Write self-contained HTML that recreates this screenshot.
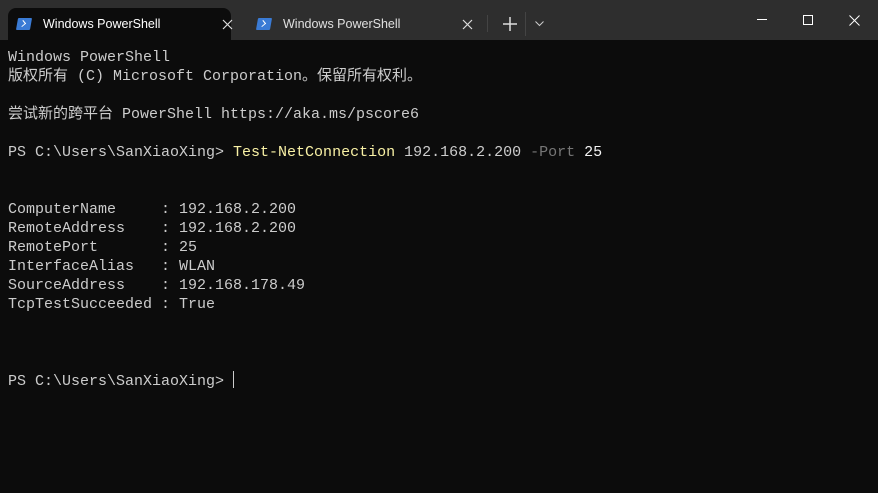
<!DOCTYPE html>
<html><head><meta charset="utf-8"><style>
body{margin:0;width:878px;height:493px;background:#0c0c0c;overflow:hidden;position:relative;font-family:"Liberation Sans",sans-serif}
.tb{position:absolute;left:0;top:0;width:878px;height:40px;background:#2e2e2e}
.tab{position:absolute;top:8px;height:32px;width:223px;left:8px;background:#0c0c0c;border-radius:8px 8px 0 0}
.t{position:absolute;font-size:12.5px;color:#fff;top:17px}
.ic{position:absolute;top:18px;width:14px;height:12px;background:#3a7bd5;transform:skewX(-10deg);border-radius:1px}
.ic:after{content:"";position:absolute;left:3px;top:3px;width:4px;height:4px;border-right:1.5px solid #fff;border-bottom:1.5px solid #fff;transform:rotate(-45deg)}
pre{position:absolute;left:8px;top:48px;margin:0;font-family:"Liberation Mono","Noto Sans CJK SC",monospace;font-size:15px;line-height:19px;color:#cccccc}
.y{color:#f9f1a5}.g{color:#767676}.w{color:#f2f2f2}
.cur{display:inline-block;width:1px;height:17px;background:#ccc;vertical-align:-3px}
</style></head><body>
<div class="tb">
<div class="tab"></div>
<div class="ic" style="left:17px"></div>
<div class="t" style="left:43px">Windows PowerShell</div>
<svg style="position:absolute;left:222px;top:19px" width="11" height="11"><path d="M1 1L10 10M10 1L1 10" stroke="#ddd" stroke-width="1.2"/></svg>
<div class="ic" style="left:257px"></div>
<div class="t" style="left:283px;color:#e0e0e0">Windows PowerShell</div>
<svg style="position:absolute;left:462px;top:19px" width="11" height="11"><path d="M1 1L10 10M10 1L1 10" stroke="#ddd" stroke-width="1.2"/></svg>
<div style="position:absolute;left:487px;top:15px;width:1px;height:17px;background:#444"></div>
<svg style="position:absolute;left:503px;top:17px" width="14" height="14"><path d="M7 0V14M0 7H14" stroke="#ddd" stroke-width="1.5"/></svg>
<div style="position:absolute;left:525px;top:12px;width:1px;height:24px;background:#444"></div>
<svg style="position:absolute;left:535px;top:21px" width="9" height="6"><path d="M0.5 0.5L4.5 4.5L8.5 0.5" stroke="#ccc" fill="none"/></svg>
<div style="position:absolute;left:757px;top:19px;width:10px;height:1px;background:#fff"></div>
<div style="position:absolute;left:803px;top:15px;width:8px;height:8px;border:1px solid #fff"></div>
<svg style="position:absolute;left:849px;top:15px" width="11" height="11"><path d="M0.5 0.5L10.5 10.5M10.5 0.5L0.5 10.5" stroke="#fff" stroke-width="1"/></svg>
</div>
<pre>Windows PowerShell
版权所有 (C) Microsoft Corporation。保留所有权利。

尝试新的跨平台 PowerShell https://aka.ms/pscore6

PS C:\Users\SanXiaoXing> <span class="y">Test-NetConnection</span> 192.168.2.200 <span class="g">-Port</span> <span class="w">25</span>


ComputerName     : 192.168.2.200
RemoteAddress    : 192.168.2.200
RemotePort       : 25
InterfaceAlias   : WLAN
SourceAddress    : 192.168.178.49
TcpTestSucceeded : True



PS C:\Users\SanXiaoXing> <span class="cur"></span></pre>
</body></html>
